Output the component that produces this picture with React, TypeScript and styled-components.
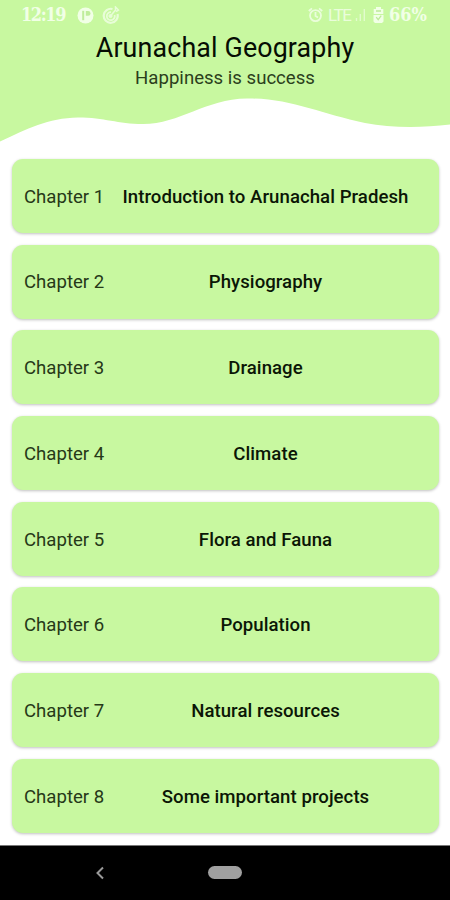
import React from "react";
import styled, { createGlobalStyle } from "styled-components";

const GlobalStyle = createGlobalStyle`
  * { box-sizing: border-box; }
  html, body { margin: 0; padding: 0; background: #fff; }
  body { font-family: Roboto, sans-serif; overflow: hidden; }
`;

const Screen = styled.main`
  width: 450px;
  height: 900px;
  display: flex;
  flex-direction: column;
  background: #fff;
  color: #101c0a;
`;

const Header = styled.header`
  height: 96px;
  flex: none;
  background: #c8f8a0;
  display: flex;
  flex-direction: column;
  align-items: center;
`;

const StatusBar = styled.div`
  width: 100%;
  height: 30px;
  padding: 0 20px 0 21px;
  display: flex;
  align-items: center;
  justify-content: space-between;
  color: #f1ffe6;
`;

const StatusGroup = styled.div<{ $gap: number }>`
  display: flex;
  align-items: center;
  gap: ${({ $gap }) => $gap}px;
  svg { display: block; flex: none; }
`;

const Clock = styled.span`
  font: 700 18px/28px "DejaVu Serif Condensed", "DejaVu Serif", serif;
  font-stretch: condensed;
  letter-spacing: -1.4px;
  width: 44px;
  margin-right: 4px;
  white-space: nowrap;
`;

const Network = styled.span`
  font-size: 17px;
  line-height: 30px;
  width: 22px;
  letter-spacing: -1.4px;
  opacity: 0.85;
`;

const Battery = styled.span`
  width: 41px;
  font: 700 18px/28px "DejaVu Serif Condensed", "DejaVu Serif", serif;
  font-stretch: condensed;
  letter-spacing: 0;
  white-space: nowrap;
`;

const Title = styled.h1`
  margin: 0;
  font-size: 26.8px;
  font-weight: 400;
  line-height: 36px;
  letter-spacing: 0.15px;
  white-space: nowrap;
  color: #060d03;
`;

const Subtitle = styled.p`
  margin: 0;
  font-size: 18.6px;
  line-height: 24px;
  color: #2b3f1c;
`;

const Wave = styled.svg`
  display: block;
  flex: none;
  width: 450px;
  height: 46px;
`;

const ChapterList = styled.div`
  flex: none;
  height: 703px;
  padding: 17px 11px 0 12px;
  display: flex;
  flex-direction: column;
  gap: 11.7px;
`;

const Card = styled.section`
  flex: none;
  height: 74px;
  padding: 1.6px 12px 0;
  display: flex;
  align-items: center;
  background: #c8f8a0;
  border-radius: 11px;
  box-shadow: 0 1px 3px rgba(0, 0, 0, 0.25);
`;

const ChapterNumber = styled.span`
  width: 80px;
  font-size: 18.6px;
  color: #263918;
  white-space: nowrap;
`;

const ChapterName = styled.h2`
  margin: 0;
  flex: 1;
  text-align: center;
  font-size: 18.6px;
  font-weight: 500;
  letter-spacing: 0.05px;
  white-space: nowrap;
  color: #0b1606;
`;

const NavBar = styled.nav`
  flex: none;
  height: 55px;
  background: #000;
  border-top: 1px solid #777;
  display: grid;
  grid-template-columns: 200px 50px 200px;
  align-items: center;
  justify-items: center;
  padding-bottom: 1px;
`;

const BackIcon = styled.svg`
  display: block;
  width: 12px;
  height: 14px;
`;

const HomePill = styled.div`
  width: 34px;
  height: 13px;
  border-radius: 7px;
  background: #a0a0a0;
`;

const chapters = [
  "Introduction to Arunachal Pradesh",
  "Physiography",
  "Drainage",
  "Climate",
  "Flora and Fauna",
  "Population",
  "Natural resources",
  "Some important projects",
];

const PocketIcon = () => (
  <svg width="17" height="17" viewBox="0 0 17 17">
    <circle cx="8.5" cy="8.5" r="8" fill="currentColor" />
    <path d="M6.2 3.8v9.4" stroke="#c0ed9b" strokeWidth="2" />
    <path d="M8.8 4h2.3a2.4 2.4 0 0 1 0 4.8H8.8z" fill="#c0ed9b" />
  </svg>
);

const TargetIcon = () => (
  <svg width="18" height="18" viewBox="0 0 18 18" fill="none" stroke="currentColor" opacity=".8">
    <path d="M10.5 3A7 7 0 1 0 15.5 8" strokeWidth="2.2" />
    <path d="M9 6.2A4 4 0 1 0 12.6 9" strokeWidth="1.8" />
    <path d="M8.5 10l5-6V1l3 3-2.5 1.6" strokeWidth="1.5" />
    <circle cx="8.5" cy="10" r="1.6" fill="currentColor" />
  </svg>
);

const AlarmIcon = () => (
  <svg width="15" height="16" viewBox="0 0 15 16" fill="none" stroke="currentColor" strokeWidth="1.8" opacity=".85">
    <circle cx="7.5" cy="8.6" r="5.5" />
    <path d="M.8 4L4 1.4M14.2 4L11 1.4M7.5 5v4l2.5 1.5" />
  </svg>
);

const SignalIcon = () => (
  <svg width="11" height="12" viewBox="0 0 11 12" stroke="currentColor" strokeWidth="1.4" opacity=".65">
    <path d="M1.5 9v3M5.3 5v7M9.3 0v12" />
  </svg>
);

const BatteryIcon = () => (
  <svg width="13" height="16" viewBox="-2 0 13 16">
    <path d="M3 0h5v2h2.3v5H.7V2H3zM.5 8h10v6.5L9 16H2L.5 14.5z" fill="currentColor" />
    <path d="M3 4h5M3.2 10.2l2 2.5 3-4" fill="none" stroke="#bdea99" strokeWidth="1.3" />
  </svg>
);

export default function App() {
  return (
    <Screen>
      <GlobalStyle />
      <Header>
        <StatusBar>
          <StatusGroup $gap={8}>
            <Clock>12:19</Clock>
            <PocketIcon />
            <TargetIcon />
          </StatusGroup>
          <StatusGroup $gap={5}>
            <AlarmIcon />
            <Network>LTE</Network>
            <SignalIcon />
            <BatteryIcon />
            <Battery>66%</Battery>
          </StatusGroup>
        </StatusBar>
        <Title>Arunachal Geography</Title>
        <Subtitle>Happiness is success</Subtitle>
      </Header>
      <Wave viewBox="0 96 450 46" preserveAspectRatio="none">
        <path
          d="M0 95H450V124.5C421 128 391 128 365 123C321 114 290 98 247 98.5C205 99 180 124 143 124C117 124 105 117.5 78 117.5C48 118 27 129 0 141.5Z"
          fill="#c8f8a0"
        />
      </Wave>
      <ChapterList>
        {chapters.map((name, index) => (
          <Card key={name}>
            <ChapterNumber>Chapter {index + 1}</ChapterNumber>
            <ChapterName>{name}</ChapterName>
          </Card>
        ))}
      </ChapterList>
      <NavBar>
        <BackIcon viewBox="0 0 12 14">
          <path d="M9 1.5L3.5 7L9 12.5" fill="none" stroke="#999" strokeWidth="2" />
        </BackIcon>
        <HomePill />
      </NavBar>
    </Screen>
  );
}
